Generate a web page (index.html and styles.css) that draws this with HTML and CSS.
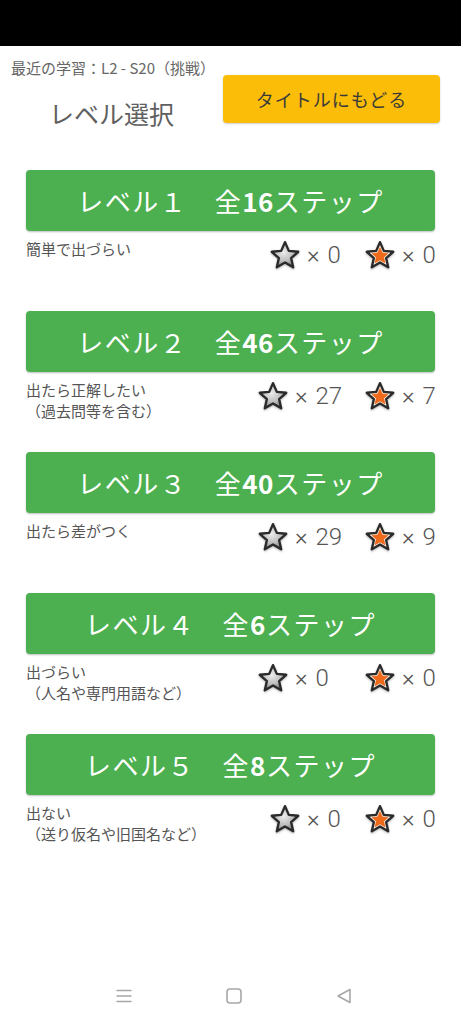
FILE: index.html
```html
<!DOCTYPE html>
<html lang="ja">
<head>
<meta charset="utf-8">
<title>レベル選択</title>
<link rel="stylesheet" href="styles.css">
</head>
<body>
<svg class="defs" width="0" height="0" aria-hidden="true">
  <defs>
    <radialGradient id="gGray" cx="45%" cy="40%" r="65%">
      <stop offset="0" stop-color="#ececec"/>
      <stop offset="0.55" stop-color="#bdbdbd"/>
      <stop offset="1" stop-color="#6f6f6f"/>
    </radialGradient>
    <symbol id="starGray" viewBox="1 1 28 28">
      <path d="M15 3 L18.53 11.15 L27.36 11.98 L20.71 17.85 L22.64 26.52 L15 22 L7.36 26.52 L9.29 17.85 L2.64 11.98 L11.47 11.15 Z" fill="url(#gGray)" stroke="#2a2a2a" stroke-width="2.2" stroke-linejoin="round"/>
    </symbol>
    <symbol id="starOrange" viewBox="1 1 28 28">
      <path d="M15 3 L18.53 11.15 L27.36 11.98 L20.71 17.85 L22.64 26.52 L15 22 L7.36 26.52 L9.29 17.85 L2.64 11.98 L11.47 11.15 Z" fill="#fdf1e4" stroke="#2a2a2a" stroke-width="2.2" stroke-linejoin="round"/>
      <path transform="translate(15 16) scale(0.6) translate(-15 -16)" d="M15 3 L18.53 11.15 L27.36 11.98 L20.71 17.85 L22.64 26.52 L15 22 L7.36 26.52 L9.29 17.85 L2.64 11.98 L11.47 11.15 Z" fill="#ef6a1a" stroke="#e35a10" stroke-width="1" stroke-linejoin="round"/>
    </symbol>
  </defs>
</svg>
<div class="screen">
  <div class="statusbar"></div>
  <header class="header">
    <div class="header-left">
      <div class="recent">最近の学習：L2 - S20（挑戦）</div>
      <h1 class="title">レベル選択</h1>
    </div>
    <button class="back-btn">タイトルにもどる</button>
  </header>

  <main class="levels">
    <section class="level">
      <button class="level-btn">レベル１　全<b>16</b>ステップ</button>
      <div class="info">
        <p class="desc">簡単で出づらい</p>
        <div class="stars">
          <span class="count count-a inset"><svg class="star"><use href="#starGray"/></svg><span class="num">× 0</span></span>
          <span class="count"><svg class="star"><use href="#starOrange"/></svg><span class="num">× 0</span></span>
        </div>
      </div>
    </section>
    <section class="level">
      <button class="level-btn">レベル２　全<b>46</b>ステップ</button>
      <div class="info">
        <p class="desc">出たら正解したい<br>（過去問等を含む）</p>
        <div class="stars">
          <span class="count count-a"><svg class="star"><use href="#starGray"/></svg><span class="num">× 27</span></span>
          <span class="count"><svg class="star"><use href="#starOrange"/></svg><span class="num">× 7</span></span>
        </div>
      </div>
    </section>
    <section class="level">
      <button class="level-btn">レベル３　全<b>40</b>ステップ</button>
      <div class="info">
        <p class="desc">出たら差がつく</p>
        <div class="stars">
          <span class="count count-a"><svg class="star"><use href="#starGray"/></svg><span class="num">× 29</span></span>
          <span class="count"><svg class="star"><use href="#starOrange"/></svg><span class="num">× 9</span></span>
        </div>
      </div>
    </section>
    <section class="level">
      <button class="level-btn">レベル４　全<b>6</b>ステップ</button>
      <div class="info">
        <p class="desc">出づらい<br>（人名や専門用語など）</p>
        <div class="stars">
          <span class="count count-a"><svg class="star"><use href="#starGray"/></svg><span class="num">× 0</span></span>
          <span class="count"><svg class="star"><use href="#starOrange"/></svg><span class="num">× 0</span></span>
        </div>
      </div>
    </section>
    <section class="level">
      <button class="level-btn">レベル５　全<b>8</b>ステップ</button>
      <div class="info">
        <p class="desc">出ない<br>（送り仮名や旧国名など）</p>
        <div class="stars">
          <span class="count count-a inset"><svg class="star"><use href="#starGray"/></svg><span class="num">× 0</span></span>
          <span class="count"><svg class="star"><use href="#starOrange"/></svg><span class="num">× 0</span></span>
        </div>
      </div>
    </section>
  </main>

  <nav class="navbar">
    <svg class="nav-icon" viewBox="0 0 18 18"><path d="M2 3.5H16M2 9H16M2 14.5H16" stroke="#a8a8a8" stroke-width="1.6" stroke-linecap="round" fill="none"/></svg>
    <svg class="nav-icon" viewBox="0 0 18 18"><rect x="2" y="2" width="14" height="14" rx="3" stroke="#a8a8a8" stroke-width="1.6" fill="none"/></svg>
    <svg class="nav-icon" viewBox="0 0 18 18"><path d="M3 9L15 2.5V15.5Z" stroke="#a8a8a8" stroke-width="1.6" stroke-linejoin="round" fill="none"/></svg>
  </nav>
</div>
</body>
</html>
```

FILE: styles.css
```css
* { box-sizing: border-box; }

html, body {
  margin: 0;
  padding: 0;
  background: #ffffff;
}

body {
  font-family: "Noto Sans CJK JP", "Noto Sans", Roboto, sans-serif;
  color: #555;
}

.defs {
  position: absolute;
  width: 0;
  height: 0;
  overflow: hidden;
}

.screen {
  min-height: 1024px;
  display: flex;
  flex-direction: column;
}

.statusbar {
  height: 46px;
  background: #000;
}

.header {
  display: grid;
  grid-template-columns: 223px 217px;
  align-items: start;
}

.header-left {
  display: flex;
  flex-direction: column;
}

.recent {
  margin-top: 12px;
  padding-left: 11px;
  font-size: 15px;
  line-height: 20px;
  color: #666;
  white-space: nowrap;
}

.title {
  margin: 19px 0 0;
  text-align: center;
  font-size: 25px;
  line-height: 32px;
  font-weight: 400;
  color: #606060;
}

.back-btn {
  margin-top: 29px;
  height: 48px;
  border: none;
  border-radius: 4px;
  background: #fbbd08;
  box-shadow: 0 1px 2px rgba(0, 0, 0, 0.2);
  font-family: "Noto Sans CJK JP", sans-serif;
  font-size: 18px;
  letter-spacing: 1px;
  color: #3a3a3a;
  padding: 0;
}

.levels {
  margin-top: 41px;
  padding: 0 26px;
  display: flex;
  flex-direction: column;
  gap: 18px;
}

.level {
  display: flex;
  flex-direction: column;
}

.level-btn {
  height: 61px;
  border: none;
  border-radius: 4px;
  background: #4caf50;
  box-shadow: 0 1px 2px rgba(0, 0, 0, 0.25);
  color: #fff;
  font-family: "Noto Sans CJK JP", sans-serif;
  font-size: 26px;
  font-weight: 400;
  letter-spacing: 1.5px;
  padding: 0;
}

.level-btn b {
  font-weight: 700;
  letter-spacing: 0.5px;
}

.info {
  height: 62px;
  display: flex;
  justify-content: space-between;
  align-items: flex-start;
  padding-top: 7px;
}

.desc {
  margin: 0;
  font-size: 15px;
  line-height: 21px;
  color: #555;
}

.stars {
  display: grid;
  grid-template-columns: 107px 72px;
  margin-top: 2px;
  margin-right: -2px;
}

.count {
  display: flex;
  align-items: center;
  height: 30px;
}

.inset {
  padding-left: 12px;
}

.star {
  width: 30px;
  height: 30px;
  flex: none;
  filter: drop-shadow(0 1px 1px rgba(0, 0, 0, 0.3));
}

.num {
  margin-left: 7px;
  font-family: Roboto, "Noto Sans", sans-serif;
  font-weight: 300;
  font-size: 24px;
  word-spacing: 2px;
  color: #555;
  white-space: nowrap;
}

.navbar {
  margin-top: auto;
  height: 56px;
  display: flex;
  justify-content: center;
  align-items: center;
  gap: 92px;
  padding-left: 6px;
  padding-bottom: 1px;
}

.nav-icon {
  width: 18px;
  height: 18px;
}
```
